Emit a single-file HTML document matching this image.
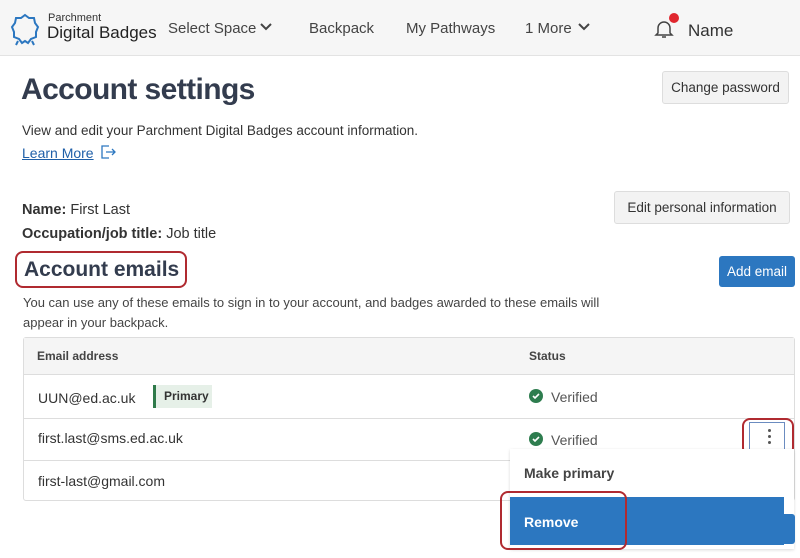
<!DOCTYPE html>
<html><head><meta charset="utf-8"><style>
*{box-sizing:border-box;margin:0;padding:0}
body{width:800px;height:558px;overflow:hidden;background:#fff;font-family:"Liberation Sans",sans-serif;color:#333;position:relative}
.a{position:absolute;white-space:nowrap}
.hdr{position:absolute;left:0;top:0;width:800px;height:56px;background:#f6f6f6;border-bottom:1px solid #e3e3e3}
.btn{position:absolute;background:#f3f3f3;border:1px solid #ddd;border-radius:3px;font-size:13.5px;color:#333;text-align:center}
.red{position:absolute;border:2px solid #b02a30;border-radius:8px}
</style></head><body>
<div class="hdr">
<svg class="a" style="left:9px;top:12px" width="32" height="34" viewBox="0 0 32 34"><path d="M16 3 l4 3 5 0 1 5 3 4 -2 5 0 5 -5 2 -3 4 -3 -2 -3 2 -3 -4 -5 -2 0 -5 -2 -5 3 -4 1 -5 5 0z" fill="none" stroke="#2c77c0" stroke-width="2"/><path d="M9 29 l-2 4 M23 29 l2 4" stroke="#2c77c0" stroke-width="2"/></svg>
<div class="a" style="left:48px;top:12px;font-size:11px;color:#333">Parchment</div>
<div class="a" style="left:47px;top:23px;font-size:17px;color:#222">Digital Badges</div>
<div class="a" style="left:168px;top:20px;font-size:15px;color:#444">Select Space</div>
<svg class="a" style="left:259px;top:22px" width="14" height="10"><path d="M2 2 l5 5 5-5" fill="none" stroke="#444" stroke-width="2"/></svg>
<div class="a" style="left:309px;top:20px;font-size:15px;color:#444">Backpack</div>
<div class="a" style="left:406px;top:20px;font-size:15px;color:#444">My Pathways</div>
<div class="a" style="left:525px;top:20px;font-size:15px;color:#444">1 More</div>
<svg class="a" style="left:577px;top:22px" width="14" height="10"><path d="M2 2 l5 5 5-5" fill="none" stroke="#444" stroke-width="2"/></svg>
<svg class="a" style="left:654px;top:18px" width="20" height="22"><path d="M4 15 V10 a6 6 0 0 1 12 0 V15 l2 2 H2z M8 19 h4" fill="none" stroke="#444" stroke-width="1.5"/></svg>
<div class="a" style="left:669px;top:13px;width:10px;height:10px;border-radius:50%;background:#e0262e"></div>
<div class="a" style="left:688px;top:21px;font-size:17px;color:#333">Name</div>
</div>
<div class="a" style="left:21px;top:73px;font-size:30px;color:#333c4e;font-weight:bold;letter-spacing:-.6px">Account settings</div>
<div class="btn" style="left:662px;top:71px;width:127px;height:33px;line-height:31px">Change password</div>
<div class="a" style="left:22px;top:123px;font-size:13.5px">View and edit your Parchment Digital Badges account information.</div>
<div class="a" style="left:22px;top:145px;font-size:14px;color:#1f5fa8;text-decoration:underline">Learn More</div>
<svg class="a" style="left:100px;top:145px" width="16" height="14"><path d="M9 1H2v12h7M6 7h9M12 4l3 3-3 3" fill="none" stroke="#2c77c0" stroke-width="1.3"/></svg>
<div class="a" style="left:22px;top:202px;font-size:14.5px"><b>Name:</b> First Last</div>
<div class="a" style="left:22px;top:226px;font-size:14.5px"><b>Occupation/job title:</b> Job title</div>
<div class="btn" style="left:614px;top:191px;width:176px;height:33px;line-height:31px">Edit personal information</div>
<div class="a" style="left:24px;top:258px;font-size:21px;color:#333c4e;font-weight:bold">Account emails</div>
<div class="red" style="left:15px;top:251px;width:172px;height:37px"></div>
<div class="a" style="left:719px;top:256px;width:76px;height:31px;background:#2c77c0;border-radius:3px;color:#fff;font-size:13.5px;text-align:center;line-height:31px">Add email</div>
<div class="a" style="left:23px;top:293px;font-size:13px;line-height:20px;color:#444">You can use any of these emails to sign in to your account, and badges awarded to these emails will<br>appear in your backpack.</div>
<div class="a" style="left:23px;top:337px;width:772px;height:164px;border:1px solid #ddd;border-radius:3px"></div>
<div class="a" style="left:24px;top:338px;width:770px;height:37px;background:#f5f5f5;border-bottom:1px solid #ddd"></div>
<div class="a" style="left:37px;top:349px;font-size:12px;font-weight:bold;color:#444">Email address</div>
<div class="a" style="left:529px;top:349px;font-size:12px;font-weight:bold;color:#444">Status</div>
<div class="a" style="left:24px;top:418px;width:770px;border-top:1px solid #ddd"></div>
<div class="a" style="left:24px;top:460px;width:770px;border-top:1px solid #ddd"></div>
<div class="a" style="left:38px;top:390px;font-size:14px">UUN@ed.ac.uk</div>
<div class="a" style="left:153px;top:385px;width:59px;height:23px;background:#e6f0e8;border-left:3px solid #2f7a4a;font-size:12px;font-weight:bold;line-height:23px;padding-left:8px">Primary</div>
<div class="a" style="left:38px;top:430px;font-size:14px">first.last@sms.ed.ac.uk</div>
<div class="a" style="left:38px;top:473px;font-size:14px">first-last@gmail.com</div>
<svg class="a" style="left:529px;top:389px" width="14" height="14"><circle cx="7" cy="7" r="7" fill="#2e7d4f"/><path d="M4 7l2 2 4-4" fill="none" stroke="#fff" stroke-width="1.6"/></svg>
<div class="a" style="left:551px;top:389px;font-size:14px;color:#555">Verified</div>
<svg class="a" style="left:529px;top:432px" width="14" height="14"><circle cx="7" cy="7" r="7" fill="#2e7d4f"/><path d="M4 7l2 2 4-4" fill="none" stroke="#fff" stroke-width="1.6"/></svg>
<div class="a" style="left:551px;top:432px;font-size:14px;color:#555">Verified</div>
<div class="a" style="left:749px;top:422px;width:36px;height:30px;border:1px solid #6b8cc0"></div>
<div class="a" style="left:768px;top:429px;width:3px;height:3px;border-radius:50%;background:#555;box-shadow:0 6px 0 #555,0 12px 0 #555"></div>
<div class="red" style="left:742px;top:418px;width:52px;height:38px"></div>
<div class="a" style="left:510px;top:449px;width:284px;height:100px;background:#fff;box-shadow:0 1px 3px rgba(0,0,0,.15)"></div>
<div class="a" style="left:524px;top:465px;font-size:14px;font-weight:bold;color:#444">Make primary</div>
<div class="a" style="left:780px;top:514px;width:15px;height:30px;background:#2c77c0;border-radius:3px"></div>
<div class="a" style="left:510px;top:497px;width:274px;height:48px;background:#2c77c0"></div>
<div class="a" style="left:524px;top:514px;font-size:14px;font-weight:bold;color:#fff">Remove</div>
<div class="red" style="left:500px;top:491px;width:127px;height:59px"></div>
</body></html>
